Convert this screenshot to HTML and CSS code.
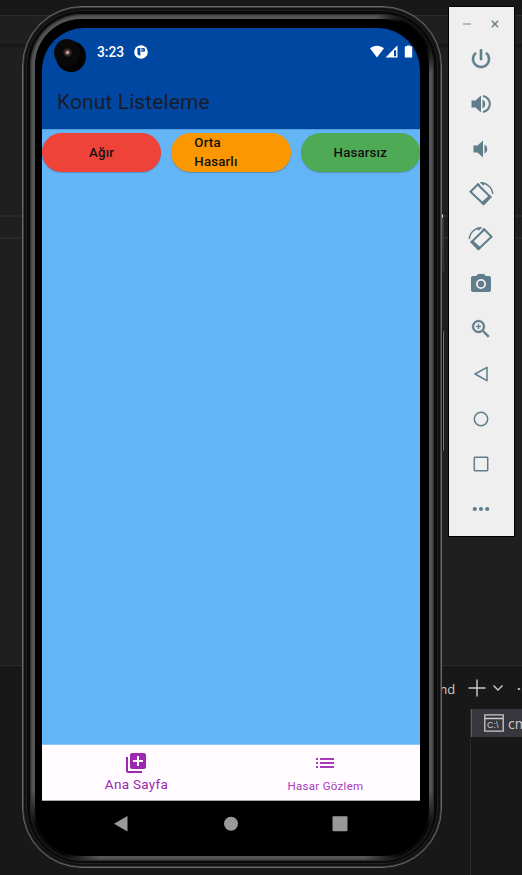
FILE: index.html
```html
<!DOCTYPE html>
<html lang="tr">
<head>
<meta charset="utf-8">
<title>Konut Listeleme</title>
<link rel="stylesheet" href="styles.css">
</head>
<body>
<div class="desktop">
  <div class="editor">
    <div class="editor-title"></div>
    <div class="editor-tabs"></div>
    <div class="editor-body"><div class="sticky-line"></div></div>
    <div class="terminal">
      <div class="terminal-bar">
        <span class="cmd">cmd</span>
        <svg class="plus" width="18" height="18" viewBox="0 0 18 18"><path d="M9 .5v17M.5 9h17"/></svg>
        <svg class="chevron" width="12" height="8" viewBox="0 0 12 8"><path d="M1.500 1.500 6 6l4.500-4.500"/></svg>
        <span class="more">···</span>
      </div>
      <div class="terminal-list">
        <div class="terminal-item">
          <svg width="20" height="18" viewBox="0 0 20 18"><path d="M.8.8h18.400v16.400H.8zM.8 4.500h18.400"/><text x="3" y="14">C:\</text></svg>
          <span>cmd</span>
        </div>
      </div>
    </div>
  </div>

  <div class="side-key power"></div>
  <div class="side-key volume"></div>
  <div class="phone">
    <div class="rim"><div class="bezel">
      <div class="screen">
        <header class="app-head">
          <div class="status">
            <span class="clock">3:23</span>
            <svg class="badge" width="14" height="14" viewBox="0 0 14 14"><circle cx="7" cy="7" r="6.800" fill="#fff"/><path d="M3.400 3h3v7.500H4.800L3.400 9zM7.400 3h1.900a1.900 1.900 0 0 1 0 3.800H7.400z" fill="#0047a1"/><path d="M8.400 4h.8v1.600h-.8z" fill="#fff"/></svg>
            <svg class="signals" width="44" height="14" viewBox="0 0 44 14" fill="#fff"><path d="M0 3.300C4-.2 10-.2 14 3.300L7 12.500zM27.500.3v12.200H15.600z"/><path d="M24 5.200h2.100v6H24z" fill="#0047a1"/><path d="M35.500 1.200H37V.4h3v.8h1.500q.7 0 .7.700v10q0 .7-.7.700h-6q-.7 0-.7-.7v-10q0-.7.7-.7z"/></svg>
          </div>
          <h1>Konut Listeleme</h1>
        </header>
        <main>
          <div class="filters">
            <button class="heavy"><span>Ağır</span></button>
            <button class="medium"><span>Orta<br>Hasarlı</span></button>
            <button class="none"><span>Hasarsız</span></button>
          </div>
        </main>
        <nav class="tabs">
          <div class="tab active">
            <svg width="22" height="22" viewBox="1 1 22 22"><path d="M4 6H2v14c0 1.100.9 2 2 2h14v-2H4zm16-4H8c-1.100 0-2 .9-2 2v12c0 1.100.9 2 2 2h12c1.100 0 2-.9 2-2V4c0-1.100-.9-2-2-2m-1 9h-4v4h-2v-4H9V9h4V5h2v4h4z"/></svg>
            <span>Ana Sayfa</span>
          </div>
          <div class="tab">
            <svg width="24" height="24" viewBox="0 0 24 24"><path d="M3 13h2v-2H3zm0 4h2v-2H3zm0-8h2V7H3zm4 4h14v-2H7zm0 4h14v-2H7zM7 7v2h14V7z"/></svg>
            <span>Hasar Gözlem</span>
          </div>
        </nav>
        <div class="sysnav">
          <svg width="16" height="18" viewBox="0 0 16 18"><path d="M14.500 1v15.500L1 8.700z"/></svg>
          <svg width="16" height="18" viewBox="0 0 16 18"><circle cx="8" cy="8.700" r="7"/></svg>
          <svg width="16" height="18" viewBox="0 0 16 18"><rect x=".5" y="1.300" width="15" height="15" rx="1"/></svg>
        </div>
        <div class="camera"><i></i></div>
      </div>
    </div></div>
  </div>

  <aside class="toolbar">
    <div class="window-keys">
      <svg width="8" height="8" viewBox="0 0 8 8"><path d="M0 4h8" opacity=".6"/></svg>
      <svg width="8" height="8" viewBox="0 0 8 8"><path d="m.8.800 6.400 6.400m0-6.400L.8 7.200"/></svg>
    </div>
    <svg viewBox="0 0 24 24"><path d="M13 2.500h-2v10.500h2zm4.830 2.670-1.420 1.420A6.920 6.920 0 0 1 19 12a7 7 0 1 1-11.420-5.420L6.170 5.170A8.930 8.930 0 0 0 3 12a9 9 0 1 0 14.830-6.830" stroke="#607d8b" stroke-width=".6"/></svg>
    <svg viewBox="0 0 24 24"><path d="M2.500 8.500v7h4l5.500 5v-17l-5.500 5zM13.500 7.500v9a5 5 0 0 0 0-9"/><path class="line" d="M14 4a8.100 8.100 0 0 1 0 16"/></svg>
    <svg viewBox="0 0 24 24"><path d="M4.500 8.500v7h4l5.500 5v-17l-5.500 5zM15.500 7.500v9a5 5 0 0 0 0-9"/></svg>
    <svg viewBox="0 0 24 24"><g id="rotate"><path class="line" d="M8.700 2.500 1.500 9.700 14.500 22l7-7z"/><path d="m7.500 2 2.300-.7 1.700 2.200-2 .5zM13.200 22l-1.200-1.200 8.700-8 1.900 2.200-7 7.500q-1 1-2.400-.5z"/><path d="M11.500.8A12 12 0 0 1 23.700 12" fill="none" stroke="#607d8b" stroke-width="1.400"/><path d="m11.200.2 5.300 1-2.300 2.600z"/></g></svg>
    <svg viewBox="0 0 24 24"><use href="#rotate" transform="matrix(-1 0 0 1 24 0)"/></svg>
    <svg viewBox="0 0 24 24"><circle cx="12" cy="12" r="3.200"/><path d="M9 2 7.170 4H4c-1.100 0-2 .9-2 2v12c0 1.100.9 2 2 2h16c1.100 0 2-.9 2-2V6c0-1.100-.9-2-2-2h-3.170L15 2zm3 15a5 5 0 1 1 0-10 5 5 0 0 1 0 10"/></svg>
    <svg viewBox="0 0 24 24"><path d="M15.500 14h-.79l-.28-.27A6.470 6.470 0 0 0 16 9.500 6.500 6.500 0 1 0 9.500 16c1.610 0 3.090-.59 4.230-1.570l.27.280v.79l5 4.990L20.490 19zm-6 0a4.500 4.500 0 1 1 0-9 4.500 4.500 0 0 1 0 9m2.500-4h-2v2H9v-2H7V9h2V7h1v2h2z" stroke="#607d8b" stroke-width=".3"/></svg>
    <svg viewBox="0 0 24 24"><path class="thin" d="M18 5.300v13.400L6 12z"/></svg>
    <svg viewBox="0 0 24 24"><circle class="thin" cx="12" cy="12" r="6.700"/></svg>
    <svg viewBox="0 0 24 24"><rect class="thin" x="5.300" y="5.300" width="13.400" height="13.400" rx=".7"/></svg>
    <svg viewBox="0 0 24 24"><circle cx="5.800" cy="12" r="2.100"/><circle cx="12" cy="12" r="2.100"/><circle cx="18.200" cy="12" r="2.100"/></svg>
  </aside>
</div>
</body>
</html>
```

FILE: styles.css
```css
* { box-sizing: border-box; }
body { margin: 0; overflow: hidden; }
svg { display: block; }
.desktop {
  position: relative;
  width: 522px;
  height: 875px;
  overflow: hidden;
  background: #1f1f1f;
  font-family: Roboto, sans-serif;
}

.editor { display: flex; flex-direction: column; height: 875px; }
.editor > div { flex: none; }
.editor-title { height: 16px; background: #181818; border-bottom: 1px solid #2b2b2b; }
.editor-tabs { height: 28px; background: #1f1f1f; }
.editor-body { height: 621px; padding-top: 171px; background: linear-gradient(#151515, #1f1f1f 5px); }
.sticky-line { height: 24px; border: solid #292929; border-width: 2px 0; }
.terminal { height: 210px; background: #181818; border-top: 1px solid #2b2b2b; font-family: "Open Sans", sans-serif; color: #ccc; }
.terminal-bar { display: flex; align-items: center; height: 43px; padding-left: 429px; font-size: 13px; }
.cmd { flex: none; width: 39px; padding-top: 3px; }
.plus, .chevron { flex: none; fill: none; stroke: #ccc; stroke-width: 1.400; }
.chevron { margin-left: 6px; }
.more { margin-left: 13px; font-weight: 700; letter-spacing: 2px; }
.terminal-list { width: 90px; height: 166px; margin-left: 470px; border-left: 1px solid #2b2b2b; }
.terminal-item { display: flex; align-items: center; gap: 4px; height: 28px; padding-left: 12px; background: #37373d; border-left: 1px solid #0078d4; font-size: 14px; }
.terminal-item svg { flex: none; fill: none; stroke: #ccc; stroke-width: 1.300; }
.terminal-item text { fill: #ccc; stroke: none; font: 9px "Liberation Sans", sans-serif; }

.phone {
  position: absolute;
  left: 22px;
  top: 6px;
  width: 420px;
  height: 862px;
  padding: 7px 7px 6px;
  border: 1px solid #686868;
  border-radius: 60px;
  background: #0a0a0a;
  box-shadow: inset 0 0 0 1px #3c3c3c, inset 0 0 0 3px #101010, inset 0 0 0 4px #222;
}
.rim {
  height: 100%;
  padding: 5px;
  border-radius: 52px;
  background:
    radial-gradient(circle at 95% 2.500%, #050505 18px, transparent 42px),
    radial-gradient(circle at 4% 98%, #080808 22px, transparent 55px),
    radial-gradient(circle at 96% 98%, #080808 22px, transparent 55px),
    #565656;
  box-shadow: inset 0 0 2px 1px #242424;
}
.bezel { height: 100%; padding: 9px 8px 0 7px; border-radius: 46px; background: #000; }
.screen { position: relative; display: flex; flex-direction: column; width: 378px; height: 820px; border-radius: 42px; overflow: hidden; background: #000; }
.side-key { position: absolute; left: 440px; width: 4px; background: #080808; border-right: 1px solid #777; border-radius: 1px; }
.power { top: 213px; height: 59px; background: linear-gradient(#111 1px, #ddd 2px, #ddd 4px, #444 5px, #222); border-color: #333; }
.volume { top: 331px; height: 120px; }

.app-head { flex: none; height: 101px; background: #0047a1; }
.status { display: flex; align-items: center; height: 46px; padding-left: 55px; color: #fff; }
.clock { width: 37px; padding-top: 2px; font-size: 13.800px; font-weight: 500; line-height: 16px; }
.badge { margin-top: 2px; }
.signals { margin: 1px 0 0 222px; }
h1 { margin: 15px 0 0 15px; color: #1a1c2b; font-size: 21px; font-weight: 400; line-height: 26px; letter-spacing: .1px; }
main { flex: none; height: 616px; padding-top: 4px; background: #64b5f6; border-bottom: 1px solid #8dc6f6; box-shadow: inset 0 1px #539ee0; }
.filters { display: flex; justify-content: space-between; }
.filters button { display: flex; align-items: center; justify-content: center; width: 119.300px; height: 38.500px; padding: 0 23px; border: 0; border-radius: 20px; box-shadow: 0 1px 1px #0003; color: #111; font: 500 13.200px/19px Roboto, sans-serif; letter-spacing: .2px; text-align: left; }
.filters .heavy { background: #ef433a; }
.filters .medium { justify-content: flex-start; background: #fb9700; }
.filters .none { background: #4eaa55; }
.tabs { display: flex; flex: none; height: 56px; background: #fffbff; border-bottom: 1px solid #aaa; color: #9c27b0; }
.tab { display: flex; flex: 1; flex-direction: column; align-items: center; padding-top: 6px; font-size: 11.500px; letter-spacing: .3px; line-height: 16px; fill: currentColor; color: #a63bb7; }
.tab span { margin-top: 3px; }
.tab.active { padding-top: 7px; font-size: 13.500px; color: #9c27b0; }
.tab svg { position: relative; left: -1px; }
.tab.active span { margin-top: 2px; }
.sysnav { display: flex; justify-content: center; gap: 93.500px; width: 377px; padding: 14px 0 0; fill: #999; }
.sysnav svg { flex: none; }
.camera { position: absolute; left: 14px; top: 13px; width: 30px; height: 31px; border-radius: 50%; background: #020202; }
.camera::before { content: ""; position: absolute; left: -2px; top: -2px; width: 26px; height: 27px; border-radius: 50%; background: #090909; }
.camera i { position: absolute; left: 7px; top: 7px; width: 9px; height: 9px; border: 1px solid #24201f; border-radius: 50%; background: radial-gradient(circle at 50% 50%, #c7a394 0 1px, #5b4743 2px, #171414 4px); }

.toolbar {
  position: absolute;
  left: 448px;
  top: 6px;
  display: flex;
  flex-direction: column;
  align-items: center;
  gap: 21px;
  width: 67px;
  height: 531px;
  padding-right: 1px;
  background: #efefef;
  border: 1px solid #000;
  fill: #607d8b;
}
.toolbar > svg { width: 24px; height: 24px; flex: none; overflow: visible; }
.window-keys { display: flex; gap: 20px; height: 19px; padding-top: 13px; stroke: #607d8b; stroke-width: 1.400; }
.toolbar .line { fill: none; stroke: #607d8b; stroke-width: 2; }
.toolbar .thin { fill: none; stroke: #607d8b; stroke-width: 1.500; stroke-linejoin: round; }
```
